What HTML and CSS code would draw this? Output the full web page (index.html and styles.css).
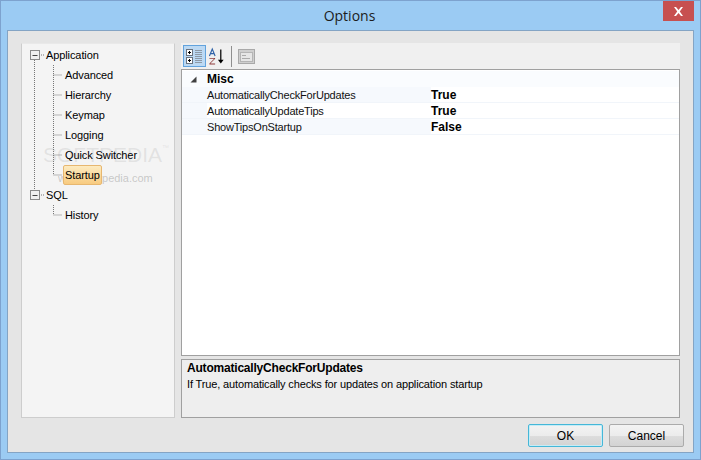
FILE: index.html
```html
<!DOCTYPE html>
<html lang="en">
<head>
<meta charset="utf-8">
<title>Options</title>
<link rel="stylesheet" href="styles.css">
</head>
<body>
<div class="window">
  <header class="titlebar">
    <span class="title">Options</span>
    <button class="close" aria-label="Close">
      <svg width="11" height="9" viewBox="0 0 11 9"><path d="M1 0h2l2.500 3 2.500-3h2L6.800 4.500 10 9H8L5.500 6 3 9H1l3.200-4.500z" fill="#fff"/></svg>
    </button>
  </header>
  <main class="client">
    <div class="panes">
      <nav class="tree">
        <div class="watermark">SOFTPEDIA<sup>™</sup></div>
        <div class="watermark-url">www.softpedia.com</div>
        <svg class="tree-lines" width="153" height="200" viewBox="0 0 153 200">
          <g stroke="#777" stroke-dasharray="1 1" fill="none">
            <path d="M13.500 17V147M32.500 22V132M32.500 32H41M32.500 52H41M32.500 72H41M32.500 92H41M32.500 112H41M32.500 132H41M18 12H24M18 152H24M32.500 162V172H41"/>
          </g>
          <g fill="#f0f0f0" stroke="#8a8a8a">
            <rect x="9.500" y="7.500" width="9" height="9"/>
            <rect x="9.500" y="147.500" width="9" height="9"/>
          </g>
          <path d="M11.500 12.500h5M11.500 152.500h5" stroke="#444"/>
        </svg>
        <ul class="tree-list">
          <li class="node root">Application</li>
          <li class="node child">Advanced</li>
          <li class="node child">Hierarchy</li>
          <li class="node child">Keymap</li>
          <li class="node child">Logging</li>
          <li class="node child">Quick Switcher</li>
          <li class="node child"><span class="selected">Startup</span></li>
          <li class="node root">SQL</li>
          <li class="node child">History</li>
        </ul>
      </nav>
      <section class="props">
        <div class="toolbar">
          <button class="tool active" aria-label="Categorized">
            <svg width="19" height="17" viewBox="0 0 19 17">
              <g fill="#fff" stroke="#6b7480"><rect x="1.500" y="1.500" width="6" height="6"/><rect x="1.500" y="9.500" width="6" height="6"/></g>
              <path d="M3 4.500h3M4.500 3v3M3 12.500h3M4.500 11v3" stroke="#000"/>
              <path d="M10 2.500h7M10 4.500h7M10 6.500h7M10 8.500h7M10 10.500h7M10 12.500h7M10 14.500h7" stroke="#8d99a6"/>
            </svg>
          </button>
          <button class="tool" aria-label="Alphabetical">
            <svg width="19" height="19" viewBox="0 0 19 19">
              <path d="M1.500 9L4.500 1.500 7.500 9M2.700 6.500H6.300" fill="none" stroke="#2f62a8" stroke-width="1.200"/>
              <path d="M1.500 11h6v1L2.500 17h5v1h-6v-1l5-5h-5z" fill="#8e3a3a"/>
              <path d="M13.500 2v13" stroke="#000" stroke-width="1.300"/>
              <path d="M10.500 13h6l-3 4z" fill="#000"/>
            </svg>
          </button>
          <span class="sep"></span>
          <button class="tool disabled" aria-label="Property pages">
            <svg width="17" height="15" viewBox="0 0 17 15">
              <rect x=".5" y=".5" width="16" height="14" fill="#cfcfcf" stroke="#a9a9a9"/>
              <rect x="2.500" y="3.500" width="12" height="9" fill="#e6e6e6" stroke="#b5b5b5"/>
              <path d="M4 6.500h4M4 9.500h8" stroke="#aaa"/>
            </svg>
          </button>
        </div>
        <div class="grid">
          <div class="cat">
            <svg class="cat-arrow" width="7" height="7" viewBox="0 0 7 7"><path d="M6.500 0.500V6.500H.5z" fill="#404040"/></svg>
            <span>Misc</span>
          </div>
          <div class="row"><span class="gutter"></span><span class="key">AutomaticallyCheckForUpdates</span><span class="val">True</span></div>
          <div class="row focus"><span class="gutter"></span><span class="key">AutomaticallyUpdateTips</span><span class="val">True</span></div>
          <div class="row"><span class="gutter"></span><span class="key">ShowTipsOnStartup</span><span class="val">False</span></div>
        </div>
        <div class="desc">
          <strong class="desc-title">AutomaticallyCheckForUpdates</strong>
          <p class="desc-text">If True, automatically checks for updates on application startup</p>
        </div>
      </section>
    </div>
    <footer class="buttons">
      <button class="btn default">OK</button>
      <button class="btn">Cancel</button>
    </footer>
  </main>
</div>
</body>
</html>
```
FILE: styles.css
```css
* { box-sizing: border-box; }
html, body { margin: 0; padding: 0; }
body { font-family: "Liberation Sans", Arial, sans-serif; font-size: 11px; color: #000; }
button { font: inherit; margin: 0; padding: 0; }
.window {
  width: 701px; height: 460px; background: #9bcbf3;
  border: 1px solid #7da2ce; display: flex; flex-direction: column;
}
.titlebar { height: 29px; flex: none; position: relative; display: flex; justify-content: center; align-items: center; padding-bottom: 1px; }
.title { font-family: "Open Sans", sans-serif; font-size: 14px; color: #1c1c1c; padding-right: 2px; }
.close {
  position: absolute; right: 6px; top: 0; width: 31px; height: 20px;
  background: #c75050; border: 0; display: flex; align-items: center; justify-content: center;
}
.client {
  flex: 1; margin: 0 6px 7px 6px; background: #e5e5e5; border: 1px solid #84a4c4;
  padding: 12px 9px 5px 13px; display: flex; flex-direction: column;
}
.panes { display: flex; gap: 6px; height: 375px; padding-right: 4px; }
.tree {
  width: 154px; flex: none; background: #f4f4f4; border: 1px solid #cdcdcd;
  border-top-color: #e9e9e9; position: relative;
}
.tree-lines { position: absolute; left: -1px; top: -1px; }
.tree-list { list-style: none; margin: 0; padding: 1px 0 0; position: relative; letter-spacing: -.1px; }
.node { height: 20px; display: flex; align-items: center; color: #000; white-space: nowrap; }
.root { padding-left: 24px; }
.child { padding-left: 43px; }
.selected {
  display: flex; align-items: center; height: 20px; padding: 0 1px;
  margin-left: -2px; background: linear-gradient(#fdebc0, #f8cb80);
  border: 1px solid #e7b770; border-radius: 2px;
}
.watermark {
  position: absolute; left: 21px; top: 99px; font-size: 21px;
  color: rgba(150,150,150,.2); white-space: nowrap;
}
.watermark sup { font-size: 7px; vertical-align: 12px; }
.watermark-url { position: absolute; left: 36px; top: 128px; font-size: 11px; color: rgba(130,130,130,.4); white-space: nowrap; }
.props { flex: 1; display: flex; flex-direction: column; min-width: 0; }
.toolbar { height: 26px; flex: none; background: #f0f0f0; display: flex; align-items: center; padding: 0 2px; }
.tool { background: transparent; border: 1px solid transparent; display: flex; align-items: center; justify-content: center; height: 22px; }
.tool.active { width: 23px; background: #bcd9f3; border-color: #62a3dd; }
.tool:nth-child(2) { width: 20px; margin-left: 1px; }
.tool.disabled { width: 17px; margin-left: 6px; border: 0; }
.sep { width: 1px; height: 21px; background: #8f8f8f; margin-left: 4px; }
.grid {
  height: 287px; flex: none; background: #fff; border: 1px solid #a0a0a0;
  padding-top: 1px;
}
.cat { height: 16px; display: flex; align-items: center; font-weight: 700; font-size: 12px; padding-left: 8px; gap: 10px; background: #fafcfe; }
.cat-arrow { flex: none; }
.row { height: 16px; display: flex; align-items: center; border-bottom: 1px solid #f1f5fa; }
.gutter { width: 25px; height: 100%; flex: none; background: #f6f9fd; }
.key { width: 224px; height: 100%; flex: none; color: #111; letter-spacing: -.2px; background: #f6f9fd; display: flex; align-items: center; }
.row.focus .key { background: #fff; }
.val { font-weight: 700; font-size: 12px; }
.desc {
  margin-top: 3px; flex: 1; background: #eeeeee; border: 1px solid #a0a0a0;
  padding: 1px 5px;
}
.desc-title { display: block; line-height: 14px; font-size: 12px; letter-spacing: -.2px; }
.desc-text { margin: 2px 0 0; line-height: 14px; letter-spacing: -.14px; }
.buttons { display: flex; justify-content: flex-end; gap: 6px; margin-top: 6px; }
.btn {
  width: 75px; height: 23px; border: 1px solid #ababab; border-radius: 2px;
  background: linear-gradient(#f3f3f3 0, #ececec 50%, #dddddd 51%, #d3d3d3 100%);
  color: #000; font-size: 12px;
}
.btn.default { border-color: #45b7d8; box-shadow: inset 0 0 0 1px #c6ecf6; }
```
